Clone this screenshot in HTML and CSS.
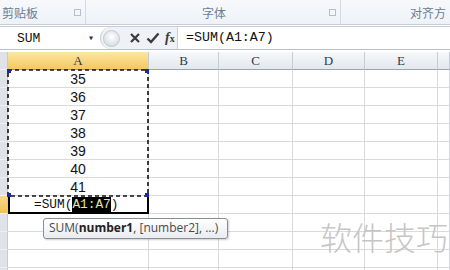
FILE: index.html
```html
<!DOCTYPE html>
<html lang="zh-CN">
<head>
    <meta charset="UTF-8">
    <title>SUM</title>
    <link rel="stylesheet" href="styles.css">
</head>
<body>
    <div class="ribbon">
        <div class="group group-clip">
            <span class="group-label">剪贴板</span>
            <span class="launcher"></span>
        </div>
        <div class="group group-font">
            <span class="group-label center">字体</span>
            <span class="launcher"></span>
        </div>
        <div class="group group-align">
            <span class="group-label">对齐方</span>
        </div>
    </div>

    <div class="formula-bar">
        <div class="name-box">
            <span>SUM</span>
            <span class="drop">&#9662;</span>
        </div>
        <div class="fx-buttons">
            <span class="knob"></span>
            <svg class="ico" width="12" height="12" viewBox="0 0 12 12"><path d="M2 2 L10 10 M10 2 L2 10" stroke="#3b3b3b" stroke-width="2.2"/></svg>
            <svg class="ico" width="14" height="12" viewBox="0 0 14 12"><path d="M1.5 6.5 L5 10 L12.5 1.5" stroke="#3b3b3b" stroke-width="2.4" fill="none"/></svg>
            <span class="fx"><i>f</i><small>x</small></span>
        </div>
        <div class="formula-input">=SUM(A1:A7)</div>
    </div>

    <div class="sheet">
        <div class="corner"></div>
        <div class="col-head sel">A</div>
        <div class="col-head">B</div>
        <div class="col-head">C</div>
        <div class="col-head">D</div>
        <div class="col-head">E</div>
        <div class="col-head"></div>

        <div class="row-head"></div><div class="cell num">35</div><div class="cell"></div><div class="cell"></div><div class="cell"></div><div class="cell"></div><div class="cell"></div>
        <div class="row-head"></div><div class="cell num">36</div><div class="cell"></div><div class="cell"></div><div class="cell"></div><div class="cell"></div><div class="cell"></div>
        <div class="row-head"></div><div class="cell num">37</div><div class="cell"></div><div class="cell"></div><div class="cell"></div><div class="cell"></div><div class="cell"></div>
        <div class="row-head"></div><div class="cell num">38</div><div class="cell"></div><div class="cell"></div><div class="cell"></div><div class="cell"></div><div class="cell"></div>
        <div class="row-head"></div><div class="cell num">39</div><div class="cell"></div><div class="cell"></div><div class="cell"></div><div class="cell"></div><div class="cell"></div>
        <div class="row-head"></div><div class="cell num">40</div><div class="cell"></div><div class="cell"></div><div class="cell"></div><div class="cell"></div><div class="cell"></div>
        <div class="row-head"></div><div class="cell num">41</div><div class="cell"></div><div class="cell"></div><div class="cell"></div><div class="cell"></div><div class="cell"></div>
        <div class="row-head sel"></div><div class="cell active">=SUM(<span class="ref">A1:A7</span>)</div><div class="cell"></div><div class="cell"></div><div class="cell"></div><div class="cell"></div><div class="cell"></div>
        <div class="row-head"></div><div class="cell"></div><div class="cell"></div><div class="cell"></div><div class="cell"></div><div class="cell"></div><div class="cell"></div>
        <div class="row-head"></div><div class="cell"></div><div class="cell"></div><div class="cell"></div><div class="cell"></div><div class="cell"></div><div class="cell"></div>
        <div class="row-head"></div><div class="cell"></div><div class="cell"></div><div class="cell"></div><div class="cell"></div><div class="cell"></div><div class="cell"></div>
        <div class="row-head"></div><div class="cell"></div><div class="cell"></div><div class="cell"></div><div class="cell"></div><div class="cell"></div><div class="cell"></div>

        <!-- copy range marquee around A1:A7 -->
        <svg class="marquee" width="144" height="130" viewBox="0 0 144 130">
            <rect x="1" y="1" width="140" height="126" fill="none" stroke="#111" stroke-width="1.6" stroke-dasharray="4 3"/>
            <rect x="0" y="0" width="4" height="4" fill="#1c2a9c"/>
            <rect x="138" y="0" width="4" height="4" fill="#1c2a9c"/>
            <rect x="0" y="124" width="4" height="4" fill="#1c2a9c"/>
            <rect x="138" y="124" width="4" height="4" fill="#1c2a9c"/>
        </svg>

        <div class="tooltip">SUM(<b>number1</b>, [number2], ...)</div>
    </div>

    <div class="watermark">软件技巧</div>
</body>
</html>
```

FILE: styles.css
```css
html {
    overflow: hidden;
}

body {
    margin: 0;
    width: 450px;
    height: 270px;
    overflow: hidden;
    background: #fff;
    font-family: "Liberation Sans", Arial, sans-serif;
    position: relative;
}

.ribbon {
    display: flex;
    height: 24px;
    background: linear-gradient(#f7f9fc, #eef2f7);
    border-bottom: 1px solid #c5cdd8;
}

.group {
    position: relative;
    border-right: 1px solid #d3dae3;
    display: flex;
    align-items: center;
}

.group-clip { width: 85px; }
.group-font { width: 254px; justify-content: center; }
.group-align { flex: 1; border-right: none; justify-content: flex-end; padding-right: 4px; }

.group-label {
    font-family: "Noto Sans CJK SC", sans-serif;
    font-size: 12px;
    color: #6b7d93;
    padding-left: 2px;
}

.launcher {
    position: absolute;
    right: 4px;
    top: 9px;
    width: 5px;
    height: 5px;
    border: 1px solid #b6bfcb;
    background: #f4f6f9;
}

.formula-bar {
    display: flex;
    height: 22px;
    margin-top: 1px;
    background: #fff;
    border-top: 1px solid #c8ced6;
    border-bottom: 1px solid #b9c1cb;
}

.name-box {
    width: 100px;
    display: flex;
    align-items: center;
    justify-content: space-between;
    padding: 0 6px 0 17px;
    box-sizing: border-box;
    font-family: "Liberation Mono", monospace;
    font-size: 13px;
    color: #111;
}

.name-box .drop {
    font-size: 10px;
    color: #333;
}

.fx-buttons {
    width: 78px;
    display: flex;
    align-items: center;
    gap: 5px;
    background: #eef1f5;
    border-radius: 11px 0 0 11px;
    border-left: 1px solid #c9d0d8;
    border-right: 1px solid #c9d0d8;
    padding-left: 2px;
    box-sizing: border-box;
}

.knob {
    width: 15px;
    height: 15px;
    border-radius: 50%;
    background: radial-gradient(circle at 50% 40%, #fff, #cdd3da);
    border: 1px solid #c2c9d1;
    margin-right: 4px;
}

.fx {
    font-family: "Liberation Serif", serif;
    font-size: 14px;
    font-weight: bold;
    color: #3b3b3b;
}

.fx small { font-size: 10px; }

.formula-input {
    flex: 1;
    font-family: "Liberation Mono", monospace;
    font-size: 13.3px;
    line-height: 22px;
    padding-left: 8px;
    color: #111;
}

.sheet {
    position: relative;
    margin-top: 2px;
    height: 220px;
    overflow: hidden;
    display: grid;
    grid-template-columns: 8px 141px 70px 74px 72px 73px 1fr;
    grid-auto-rows: 18px;
}

.corner,
.row-head {
    background: #dfe3e8;
    border-right: 1px solid #c3cad3;
    border-bottom: 1px solid #eef0f3;
    box-sizing: border-box;
}

.row-head.sel {
    background: linear-gradient(#f9d98a, #f1c05a);
}

.col-head {
    background: linear-gradient(#f6f8fa, #e3e8ee);
    border-right: 1px solid #c6ccd4;
    border-bottom: 1px solid #9ba6b4;
    box-sizing: border-box;
    text-align: center;
    font-family: "Liberation Serif", serif;
    font-size: 13px;
    line-height: 18px;
    color: #2f3a48;
}

.col-head.sel {
    background: linear-gradient(#fce7a5, #f5c75e);
    border-bottom-color: #c2984a;
}

.cell {
    border-right: 1px solid #d8dadd;
    border-bottom: 1px solid #d8dadd;
    box-sizing: border-box;
    font-size: 14px;
    line-height: 18px;
    color: #111;
}

.cell.num {
    text-align: center;
    font-family: "Liberation Sans", Arial, sans-serif;
}

.cell.active {
    position: relative;
    border: 2px solid #000;
    border-top: none;
    font-family: "Liberation Mono", monospace;
    font-size: 12.8px;
    padding-left: 24px;
    line-height: 17px;
}

.ref {
    background: #000;
    color: #e8e3a0;
}

.marquee {
    position: absolute;
    left: 7px;
    top: 17px;
}

.tooltip {
    position: absolute;
    left: 43px;
    top: 166px;
    height: 19px;
    padding: 0 9px 0 5px;
    border: 1px solid #8a8f96;
    border-radius: 3px;
    background: linear-gradient(#ffffff, #e9ecf0);
    box-shadow: 1px 1px 2px rgba(0, 0, 0, 0.2);
    font-family: "Open Sans", sans-serif;
    font-size: 12px;
    line-height: 18px;
    color: #4a4a4a;
    white-space: nowrap;
}

.tooltip b { color: #222; }

.watermark {
    position: absolute;
    left: 320px;
    top: 220px;
    font-family: "Noto Sans CJK SC", sans-serif;
    font-weight: 300;
    font-size: 32px;
    line-height: 1;
    color: #c6c6c6;
}
```
